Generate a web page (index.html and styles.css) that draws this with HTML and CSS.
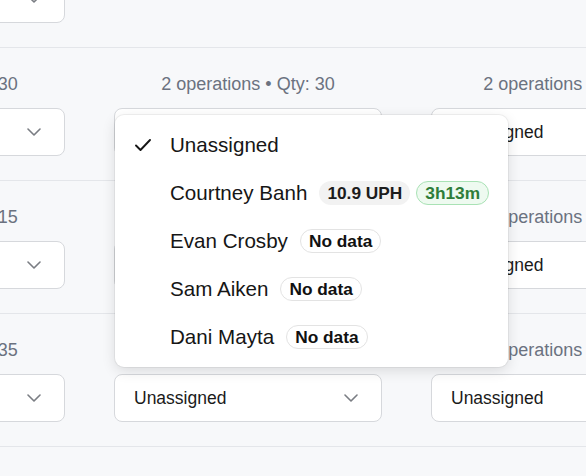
FILE: index.html
```html
<!DOCTYPE html>
<html>
<head>
<meta charset="utf-8">
<link rel="stylesheet" href="styles.css">
</head>
<body>
<div class="board">
  <div class="row">
    <div class="cell"><div class="meta">2 operations • Qty: 20</div><div class="select"><span>Unassigned</span><svg class="chev" viewBox="0 0 14 8"><path d="M1 1l6 6 6-6"/></svg></div></div>
    <div class="cell"></div>
    <div class="cell"></div>
  </div>
  <div class="row">
    <div class="cell"><div class="meta">2 operations • Qty: 30</div><div class="select"><span>Unassigned</span><svg class="chev" viewBox="0 0 14 8"><path d="M1 1l6 6 6-6"/></svg></div></div>
    <div class="cell"><div class="meta">2 operations • Qty: 30</div>
      <div class="anchor">
        <div class="select"><span>Unassigned</span><svg class="chev" viewBox="0 0 14 8"><path d="M1 1l6 6 6-6"/></svg></div>
        <div class="menu">
          <div class="item"><span class="check"><svg viewBox="0 0 16 12"><path d="M1 6.5l4.5 4.5L15 1"/></svg></span><span class="name">Unassigned</span></div>
          <div class="item"><span class="check"></span><span class="name">Courtney Banh</span><span class="pill grey">10.9 UPH</span><span class="pill green">3h13m</span></div>
          <div class="item"><span class="check"></span><span class="name">Evan Crosby</span><span class="pill plain">No data</span></div>
          <div class="item"><span class="check"></span><span class="name">Sam Aiken</span><span class="pill plain">No data</span></div>
          <div class="item"><span class="check"></span><span class="name">Dani Mayta</span><span class="pill plain">No data</span></div>
        </div>
      </div>
    </div>
    <div class="cell"><div class="meta">2 operations • Qty: 5</div><div class="select"><span>Unassigned</span><svg class="chev" viewBox="0 0 14 8"><path d="M1 1l6 6 6-6"/></svg></div></div>
  </div>
  <div class="row">
    <div class="cell"><div class="meta">2 operations • Qty: 15</div><div class="select"><span>Unassigned</span><svg class="chev" viewBox="0 0 14 8"><path d="M1 1l6 6 6-6"/></svg></div></div>
    <div class="cell"><div class="meta">2 operations • Qty: 15</div><div class="select"><span>Unassigned</span><svg class="chev" viewBox="0 0 14 8"><path d="M1 1l6 6 6-6"/></svg></div></div>
    <div class="cell"><div class="meta">2 operations • Qty: 5</div><div class="select"><span>Unassigned</span><svg class="chev" viewBox="0 0 14 8"><path d="M1 1l6 6 6-6"/></svg></div></div>
  </div>
  <div class="row">
    <div class="cell"><div class="meta">2 operations • Qty: 35</div><div class="select"><span>Unassigned</span><svg class="chev" viewBox="0 0 14 8"><path d="M1 1l6 6 6-6"/></svg></div></div>
    <div class="cell"><div class="meta">2 operations • Qty: 35</div><div class="select"><span>Unassigned</span><svg class="chev" viewBox="0 0 14 8"><path d="M1 1l6 6 6-6"/></svg></div></div>
    <div class="cell"><div class="meta">2 operations • Qty: 5</div><div class="select"><span>Unassigned</span><svg class="chev" viewBox="0 0 14 8"><path d="M1 1l6 6 6-6"/></svg></div></div>
  </div>
  <div class="row">
    <div class="cell"><div class="meta low">1 operation • Qty: 10</div><div class="select"><span>Unassigned</span><svg class="chev" viewBox="0 0 14 8"><path d="M1 1l6 6 6-6"/></svg></div></div>
    <div class="cell"><div class="meta low">1 operation • Qty: 10</div><div class="select"><span>Unassigned</span><svg class="chev" viewBox="0 0 14 8"><path d="M1 1l6 6 6-6"/></svg></div></div>
    <div class="cell"><div class="meta low">1 operation • Qty: 10</div><div class="select"><span>Unassigned</span><svg class="chev" viewBox="0 0 14 8"><path d="M1 1l6 6 6-6"/></svg></div></div>
  </div>
</div>
</body>
</html>
```
FILE: styles.css
```css
html, body {
  margin: 0;
  padding: 0;
  background: #f7f8fa;
  overflow: hidden;
  font-family: "Liberation Sans", Arial, sans-serif;
  color: #1a1a1a;
}

.board {
  margin-top: -85px;
  margin-left: -203px;
  width: 902px;
}

.row {
  display: grid;
  grid-template-columns: 268px 268px 268px;
  column-gap: 49px;
  padding: 24px 0;
  border-bottom: 1px solid #e4e6ea;
}

.cell {
  display: flex;
  flex-direction: column;
  gap: 12px;
}

.meta {
  text-align: center;
  font-size: 18px;
  line-height: 24px;
  color: #6b7280;
  white-space: nowrap;
}

.low {
  padding-top: 4px;
}

.anchor {
  position: relative;
}

.select {
  box-sizing: border-box;
  height: 48px;
  background: #fff;
  border: 1px solid #d6d8dc;
  border-radius: 8px;
  display: flex;
  align-items: center;
  justify-content: space-between;
  padding: 0 23px 0 19px;
  font-size: 17.5px;
  color: #1a1a1a;
}

.chev {
  width: 14px;
  height: 8px;
  fill: none;
  stroke: #7a7d83;
  stroke-width: 1.6;
  stroke-linecap: round;
  stroke-linejoin: round;
}

.menu {
  position: absolute;
  top: 7px;
  left: 1px;
  width: 393px;
  box-sizing: border-box;
  padding: 6px 0;
  background: #fff;
  border-radius: 9px;
  box-shadow: 0 0 0 1px rgba(0, 0, 0, 0.05), 0 4px 14px rgba(0, 0, 0, 0.12);
  z-index: 5;
}

.item {
  display: flex;
  align-items: center;
  height: 48px;
  padding-left: 20px;
  font-size: 20.6px;
  color: #161616;
}

.check {
  width: 16px;
  height: 12px;
  margin-right: 19px;
  display: flex;
}

.check svg {
  width: 16px;
  height: 12px;
  fill: none;
  stroke: #161616;
  stroke-width: 1.9;
  stroke-linecap: round;
  stroke-linejoin: round;
}

.name {
  margin-right: 12px;
}

.pill {
  box-sizing: border-box;
  height: 24px;
  display: inline-flex;
  align-items: center;
  padding: 0 8px;
  border-radius: 12px;
  font-size: 17.3px;
  font-weight: 700;
  margin-right: 6px;
}

.grey {
  background: #f2f2f2;
  color: #1c1c1c;
}

.green {
  background: #eefaf0;
  border: 1px solid #a9e2b5;
  color: #2e7d3a;
}

.plain {
  background: #fff;
  border: 1px solid #e3e3e3;
  color: #111;
}
```
